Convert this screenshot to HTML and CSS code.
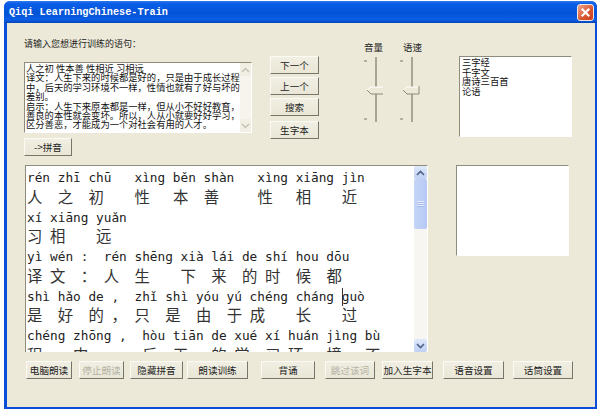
FILE: index.html
```html
<!DOCTYPE html>
<html lang="zh-CN">

<head>
  <meta charset="UTF-8">
  <title>Qiqi LearningChinese-Train</title>
  <link rel="stylesheet" href="styles.css">
</head>

<body>
  <div class="window">
    <header class="titlebar">
      <span class="title">Qiqi LearningChinese-Train</span>
      <span class="close">
        <svg width="15" height="15" viewBox="0 0 15 15">
          <path d="M4.5 4.5l6 6M10.5 4.5l-6 6" stroke="#fff" stroke-width="2.2" stroke-linecap="square" />
        </svg>
      </span>
    </header>

    <main class="client">
      <section class="top-row">
        <div class="input-col">
          <div class="prompt">请输入您想进行训练的语句：</div>
          <div class="small-box">
            <pre class="small-text">人之初 性本善 性相近 习相远
译文：人生下来的时候都是好的，只是由于成长过程
中，后天的学习环境不一样，性情也就有了好与坏的
差别。
启示：人生下来原本都是一样，但从小不好好教育，
善良的本性就会变坏。所以，人从小就要好好学习，
区分善恶，才能成为一个对社会有用的人才。</pre>
            <div class="small-scroll">
              <span class="small-arrow">
                <svg width="9" height="6" viewBox="0 0 9 6"><path d="M1 5l3.5-3.5L8 5" fill="none" stroke="#c6c3b4" stroke-width="1.5" /></svg>
              </span>
              <span class="small-arrow">
                <svg width="9" height="6" viewBox="0 0 9 6"><path d="M1 1l3.5 3.5L8 1" fill="none" stroke="#c6c3b4" stroke-width="1.5" /></svg>
              </span>
            </div>
          </div>
          <button class="btn pinyin-btn">-&gt;拼音</button>
        </div>

        <div class="nav-col">
          <button class="btn">下一个</button>
          <button class="btn">上一个</button>
          <button class="btn">搜索</button>
          <button class="btn gap-btn">生字本</button>
        </div>

        <div class="slider-col">
          <div class="slider">
            <div class="slider-label">音量</div>
            <svg width="22" height="68" viewBox="0 0 22 68">
              <path d="M0 5h3M0 63h3" stroke="#777" />
              <path d="M12 1v65" stroke="#a9a695" stroke-width="2" />
              <path d="M3 34l4-3h12v7H7z" fill="#ece9d8" />
              <path d="M3 34l4-3h12" fill="none" stroke="#fff" />
              <path d="M3 34l4 4h12" fill="none" stroke="#8d8a79" />
            </svg>
          </div>
          <div class="slider">
            <div class="slider-label">语速</div>
            <svg width="22" height="68" viewBox="0 0 22 68">
              <path d="M0 5h3M0 63h3" stroke="#777" />
              <path d="M12 1v65" stroke="#a9a695" stroke-width="2" />
              <path d="M3 34l4-3h12v7H7z" fill="#ece9d8" />
              <path d="M3 34l4-3h12" fill="none" stroke="#fff" />
              <path d="M3 34l4 4h12v-8" fill="none" stroke="#8d8a79" />
            </svg>
          </div>
        </div>

        <ul class="book-list">
          <li>三字经</li>
          <li>千字文</li>
          <li>唐诗三百首</li>
          <li>论语</li>
        </ul>
      </section>

      <section class="mid-row">
        <div class="reader">
          <div class="reader-text">
            <div class="line">rén zhī chū   xìng běn shàn   xìng xiāng jìn</div>
            <div class="line hz">人　之　初　　性&ensp;　本　善　　&ensp;性&ensp;　相　　近</div>
            <div class="line">xí xiāng yuǎn</div>
            <div class="line hz">习&ensp;相　　远</div>
            <div class="line">yì wén :  rén shēng xià lái de shí hou dōu</div>
            <div class="line hz">译&ensp;文　：&ensp;人　生　　下　来　的&ensp;时　候　都</div>
            <div class="line">shì hǎo de ,  zhǐ shì yóu yú chéng cháng <i class="caret"></i>guò</div>
            <div class="line hz">是　好　的&ensp;，&ensp;只　是　由　于&ensp;成　　长　　过</div>
            <div class="line">chéng zhōng ,  hòu tiān de xué xí huán jìng bù</div>
            <div class="line hz">程　　中　　，&ensp;后　天&ensp;　的&ensp;学　习&ensp;环&ensp;　境&ensp;　不</div>
          </div>
          <div class="scrollbar">
            <span class="scroll-btn">
              <svg width="9" height="6" viewBox="0 0 9 6"><path d="M1 5l3.5-3.5L8 5" fill="none" stroke="#4d6185" stroke-width="1.6" /></svg>
            </span>
            <span class="scroll-thumb"><i class="grip"></i></span>
            <span class="scroll-space"></span>
            <span class="scroll-btn">
              <svg width="9" height="6" viewBox="0 0 9 6"><path d="M1 1l3.5 3.5L8 1" fill="none" stroke="#4d6185" stroke-width="1.6" /></svg>
            </span>
          </div>
        </div>
        <div class="side-box"></div>
      </section>

      <section class="bottom-row">
        <button class="btn b-read">电脑朗读</button>
        <button class="btn b-stop off">停止朗读</button>
        <button class="btn b-hide">隐藏拼音</button>
        <button class="btn b-train">朗读训练</button>
        <button class="btn b-recite">背诵</button>
        <button class="btn b-skip off">跳过该词</button>
        <button class="btn b-add">加入生字本</button>
        <button class="btn b-voice">语音设置</button>
        <button class="btn b-mic">话筒设置</button>
      </section>
    </main>
  </div>
</body>

</html>
```

FILE: styles.css
```css
* {
  box-sizing: border-box;
}

body {
  background: #fff;
  font-family: "Noto Sans CJK SC", "Liberation Sans", sans-serif;
  height: 411px;
  margin: 0;
  overflow: hidden;
  padding: 1px 3px 2px 4px;
}

.window {
  background: #0b4fd8;
  border-radius: 6px 6px 0 0;
  display: flex;
  flex-direction: column;
  height: 408px;
  padding: 0 2px 2px 3px;
}

.titlebar {
  align-items: center;
  background: linear-gradient(#2f78ea 0, #0a5fe8 12%, #0453d6 55%, #0a5ee4 85%, #0646b8 100%);
  border-radius: 6px 6px 0 0;
  display: flex;
  flex: none;
  height: 22px;
  justify-content: space-between;
  margin: 0 -2px 0 -3px;
  padding: 0 3px 0 5px;
}

.title {
  color: #fff;
  font-family: "Liberation Mono", monospace;
  font-size: 10.2px;
  font-weight: bold;
}

.close {
  align-items: center;
  background: linear-gradient(135deg, #eda48a, #d8552f 60%, #c8401f);
  border: 1px solid #f2e6e0;
  border-radius: 3px;
  display: flex;
  height: 17px;
  justify-content: center;
  width: 17px;
}

.client {
  background: #ece9d8;
  display: flex;
  flex: 1;
  flex-direction: column;
}

.top-row {
  display: flex;
  height: 142px;
  padding-left: 17px;
}

.input-col {
  width: 228px;
}

.prompt {
  color: #222;
  font-size: 9px;
  height: 39px;
  line-height: 12px;
  padding-top: 15px;
}

.small-box {
  background: #fff;
  border: 1px solid #8f8c7c;
  border-right-color: #fff;
  border-bottom-color: #fff;
  display: flex;
  height: 71px;
  justify-content: space-between;
}

.small-text {
  color: #111;
  font-family: "Noto Sans CJK SC", sans-serif;
  font-size: 9.3px;
  line-height: 9.4px;
  margin: 1px 0 0 1px;
}

.small-scroll {
  background: #f6f4ec;
  display: flex;
  flex-direction: column;
  justify-content: space-between;
  width: 13px;
}

.small-arrow {
  align-items: center;
  background: #f1efe4;
  display: flex;
  height: 13px;
  justify-content: center;
}

.btn {
  background: linear-gradient(#f1efe3, #e9e6d6);
  border: 1px solid;
  border-color: #fbfaf3 #77756a #77756a #fbfaf3;
  color: #222;
  display: block;
  flex: none;
  font-family: "Noto Sans CJK SC", sans-serif;
  font-size: 9.6px;
  height: 18px;
  line-height: 14px;
  padding: 0;
}

.pinyin-btn {
  margin-top: 5px;
  width: 48px;
}

.nav-col {
  display: flex;
  flex-direction: column;
  gap: 3px;
  margin-left: 18px;
  padding-top: 33px;
  width: 49px;
}

.nav-col .btn {
  width: 49px;
}

.nav-col .gap-btn {
  margin-top: 2px;
}

.slider-col {
  display: flex;
  gap: 14px;
  margin-left: 45px;
  padding-top: 18px;
}

.slider-label {
  color: #222;
  font-size: 9.5px;
  height: 15px;
  line-height: 12px;
  white-space: nowrap;
  width: 22px;
}

.slider + .slider .slider-label {
  padding-left: 3px;
}

.book-list {
  background: #fff;
  border: 1px solid #8f8c7c;
  border-right-color: #fff;
  border-bottom-color: #fff;
  color: #111;
  font-size: 9.3px;
  height: 81px;
  line-height: 9.5px;
  list-style: none;
  margin: 33px 0 0 37px;
  padding: 1px 2px;
  width: 113px;
}

.mid-row {
  display: flex;
  height: 187px;
}

.reader {
  background: #fff;
  border: 1px solid #8f8c7c;
  border-right-color: #fff;
  border-bottom: 0;
  display: flex;
  height: 187px;
  margin-left: 18px;
  overflow: hidden;
  width: 403px;
}

.reader-text {
  color: #222;
  flex: 1;
  font-family: "DejaVu Sans Mono", "Noto Sans CJK SC", monospace;
  font-size: 12.75px;
  overflow: hidden;
  padding: 2px 0 0 1px;
}

.line {
  height: 19.75px;
  line-height: 19.75px;
  white-space: pre;
}

.line.hz {
  color: #333;
  font-family: "Noto Sans CJK SC", sans-serif;
  font-size: 15.36px;
  line-height: 17px;
}

.caret {
  border-left: 1px solid #333;
  display: inline-block;
  height: 18px;
  margin-right: -1px;
  vertical-align: middle;
}

.scrollbar {
  background: #f7f6f0;
  display: flex;
  flex: none;
  flex-direction: column;
  width: 13px;
}

.scroll-btn {
  align-items: center;
  background: linear-gradient(#dfe9fb, #bfd0f3);
  border-radius: 2px;
  display: flex;
  flex: none;
  height: 13px;
  justify-content: center;
}

.scroll-thumb {
  align-items: center;
  background: linear-gradient(90deg, #c6d5f7, #b5c9f4);
  border-radius: 2px;
  display: flex;
  flex: none;
  height: 50px;
  justify-content: center;
}

.grip {
  background: repeating-linear-gradient(#e4ecfc 0 1px, #a9bde8 1px 2px);
  height: 6px;
  width: 7px;
}

.scroll-space {
  flex: 1;
}

.side-box {
  background: #fff;
  border: 1px solid #8f8c7c;
  border-right-color: #fff;
  border-bottom-color: #fff;
  height: 91px;
  margin-left: 28px;
  width: 113px;
}

.bottom-row {
  display: flex;
  margin-top: 9px;
  padding-left: 19px;
}

.bottom-row .off {
  color: #b3b1a4;
}

.b-read { width: 46px; }
.b-stop { margin-left: 7px; width: 45px; }
.b-hide { margin-left: 6px; width: 53px; }
.b-train { margin-left: 4px; width: 61px; }
.b-recite { margin-left: 13px; width: 54px; }
.b-skip { margin-left: 10px; width: 50px; }
.b-add { margin-left: 7px; width: 51px; }
.b-voice { margin-left: 10px; width: 61px; }
.b-mic { margin-left: 9px; width: 60px; }
```
